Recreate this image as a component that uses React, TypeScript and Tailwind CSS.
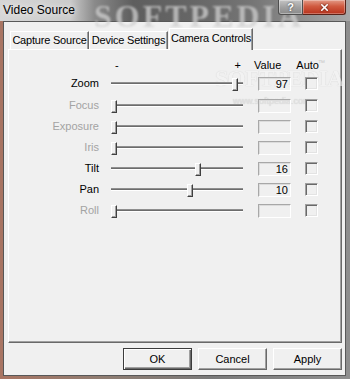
import React from "react";
import { X } from "lucide-react";

type Row = { label: string; enabled: boolean; pos: number; value?: string; h: string };

const rows: Row[] = [
  { label: "Zoom", enabled: true, pos: 123, value: "97", h: "h-[23px]" },
  { label: "Focus", enabled: false, pos: 2, h: "h-[21px]" },
  { label: "Exposure", enabled: false, pos: 2, h: "h-[21px]" },
  { label: "Iris", enabled: false, pos: 2, h: "h-[21px]" },
  { label: "Tilt", enabled: true, pos: 86, value: "16", h: "h-[21px]" },
  { label: "Pan", enabled: true, pos: 78, value: "10", h: "h-[21px]" },
  { label: "Roll", enabled: false, pos: 2, h: "h-[21px]" },
];

function Slider({ pos }: { pos: number }) {
  return (
    <div className="relative w-[136px] h-full flex items-center">
      <div className="ml-[2px] w-[132px] h-[3px] border-t border-t-[#8f8f8f] bg-[#6c6c6c] border-b border-b-white" />
      <div
        className="absolute top-1/2 -mt-[6px] w-[6px] h-[13px] bg-[#f0f0f0] border-l border-t border-l-white border-t-white border-r border-b border-r-[#404040] border-b-[#404040] shadow-[inset_-1px_-1px_0_#a0a0a0]"
        style={{ left: pos }}
      />
    </div>
  );
}

function Tab({ label, w, selected }: { label: string; w: string; selected?: boolean }) {
  if (selected) {
    return (
      <div
        className={`${w} h-[22px] -mb-[1px] ml-[1px] relative z-10 bg-[#f0f0f0] border-l border-t border-l-white border-t-white border-r border-r-[#696969] shadow-[inset_-1px_0_0_#a0a0a0] flex items-start justify-center pt-[3px] leading-[13px] whitespace-nowrap tracking-[-0.2px]`}
      >
        {label}
      </div>
    );
  }
  return (
    <div
      className={`${w} h-[18px] bg-[#f0f0f0] border-l border-t border-l-white border-t-white border-r border-r-[#696969] shadow-[inset_-1px_0_0_#a0a0a0] flex items-start justify-center pt-[2px] leading-[13px] whitespace-nowrap tracking-[-0.2px]`}
    >
      {label}
    </div>
  );
}

function Button({ label, def }: { label: string; def?: boolean }) {
  return (
    <div
      className={`w-[69px] h-[22px] flex items-center justify-center bg-[#f0f0f0] ${
        def
          ? "border border-[#3c3c3c] shadow-[inset_1px_1px_0_#ffffff,inset_-1px_-1px_0_#696969,inset_-2px_-2px_0_#a0a0a0]"
          : "border border-t-white border-l-white border-r-[#696969] border-b-[#696969] shadow-[inset_-1px_-1px_0_#a0a0a0]"
      }`}
    >
      {label}
    </div>
  );
}

export default function App() {
  return (
    <div className="w-[350px] h-[379px] flex flex-col overflow-hidden bg-[linear-gradient(90deg,#a97563_0%,#8f7d72_30%,#7a7a7a_60%,#8e8e8e_100%)] font-['Liberation_Sans',Arial,sans-serif] text-[11px] text-black">
      {/* Title bar */}
      <div className="relative h-[21px] shrink-0 flex items-start justify-between bg-[linear-gradient(90deg,#d6d6d6_0%,#cbcbcb_20%,#8a8a8a_27%,#5e5e5e_38%,#666666_55%,#757575_72%,#8c8c8c_85%,#a8a8a8_100%)]">
        <span className="pointer-events-none absolute left-[94px] -top-[8px] font-['Liberation_Serif',serif] font-bold text-[32px] tracking-[3px] text-[#cfcfcf] opacity-75 blur-[1px]">
          SOFTPEDIA
        </span>
        <span className="relative pl-[3px] pt-[3px] text-[12px] leading-[15px] [text-shadow:0_0_6px_#ffffff]">
          Video Source
        </span>
        <div className="relative flex pr-[4px]">
          <div className="w-[25px] h-[15px] rounded-bl-[3px] border border-t-0 border-[#4f4f4f] bg-[linear-gradient(180deg,#c4c4c4_0%,#a2a2a2_50%,#8a8a8a_100%)] shadow-[inset_0_0_0_1px_rgba(255,255,255,0.35)] flex items-center justify-center text-white font-bold text-[11px] leading-none [text-shadow:0_0_2px_#333]">
            ?
          </div>
          <div className="w-[43px] h-[15px] rounded-br-[3px] border border-t-0 border-l-0 border-[#5a2218] bg-[linear-gradient(180deg,#e39a86_0%,#d05a40_45%,#b8321c_100%)] shadow-[inset_0_0_0_1px_rgba(255,255,255,0.3)] flex items-center justify-center">
            <X size={11} strokeWidth={3.5} className="text-white drop-shadow-[0_0_1px_#4a1a10]" />
          </div>
        </div>
      </div>

      {/* Frame body */}
      <div className="flex-1 flex pl-[3px] pr-[4px] pb-[3px]">
        <div className="flex-1 flex flex-col bg-[#f0f0f0] border border-[#585858] pt-[6px] pl-[4px] pr-[3px] pb-[5px]">
          {/* Tabs */}
          <div className="h-[21px] flex items-end pl-[2px]">
            <Tab label="Capture Source" w="w-[79px]" />
            <Tab label="Device Settings" w="w-[79px]" />
            <Tab label="Camera Controls" w="w-[84px]" selected />
          </div>

          {/* Panel */}
          <div className="relative flex-1 border border-t-white border-l-white border-r-[#696969] border-b-[#696969] shadow-[inset_-1px_-1px_0_#a0a0a0] pt-[8px]">
            <span className="pointer-events-none absolute left-[206px] top-[10px] font-['Liberation_Serif',serif] font-bold text-[24px] tracking-[-1px] text-[#f4f4f4] [text-shadow:0_0_1px_#b0b0b0] opacity-60">
              SOFTPEDIA
            </span>
            <span className="pointer-events-none absolute left-[309px] top-[8px] text-[7px] text-[#c8c8c8]">™</span>
            <span className="pointer-events-none absolute left-[224px] top-[45px] text-[9px] text-[#e2e2e2] [text-shadow:0_0_1px_#c8c8c8]">
              www.softpedia.com
            </span>

            {/* Header */}
            <div className="relative h-[14px] flex items-center leading-[13px]">
              <div className="w-[100px]" />
              <div className="w-[136px] flex justify-between pl-[6px] pr-[4px]">
                <span>-</span>
                <span>+</span>
              </div>
              <span className="ml-[9px]">Value</span>
              <span className="ml-[15px]">Auto</span>
            </div>

            {rows.map((r) => (
              <div key={r.label} className={`relative ${r.h} flex items-center`}>
                <div
                  className={`w-[90px] text-right leading-[13px] ${
                    r.enabled ? "text-black" : "text-[#a3a3a3]"
                  }`}
                >
                  {r.label}
                </div>
                <div className="ml-[10px] h-full">
                  <Slider pos={r.pos} />
                </div>
                <div className="ml-[13px] w-[33px] h-[14px] border border-t-[#a8a8a8] border-l-[#a8a8a8] border-r-white border-b-white shadow-[inset_1px_1px_0_#dcdcdc] text-right pr-[2px] leading-[12px]">
                  {r.value ?? ""}
                </div>
                <div className="ml-[14px] w-[13px] h-[13px] border border-t-[#a0a0a0] border-l-[#a0a0a0] border-r-white border-b-white shadow-[inset_1px_1px_0_#696969,inset_-1px_-1px_0_#e3e3e3] bg-[#f0f0f0]" />
              </div>
            ))}
          </div>

          {/* Buttons */}
          <div className="mt-[5px] flex justify-end gap-[6px]">
            <Button label="OK" def />
            <Button label="Cancel" />
            <Button label="Apply" />
          </div>
        </div>
      </div>
    </div>
  );
}
